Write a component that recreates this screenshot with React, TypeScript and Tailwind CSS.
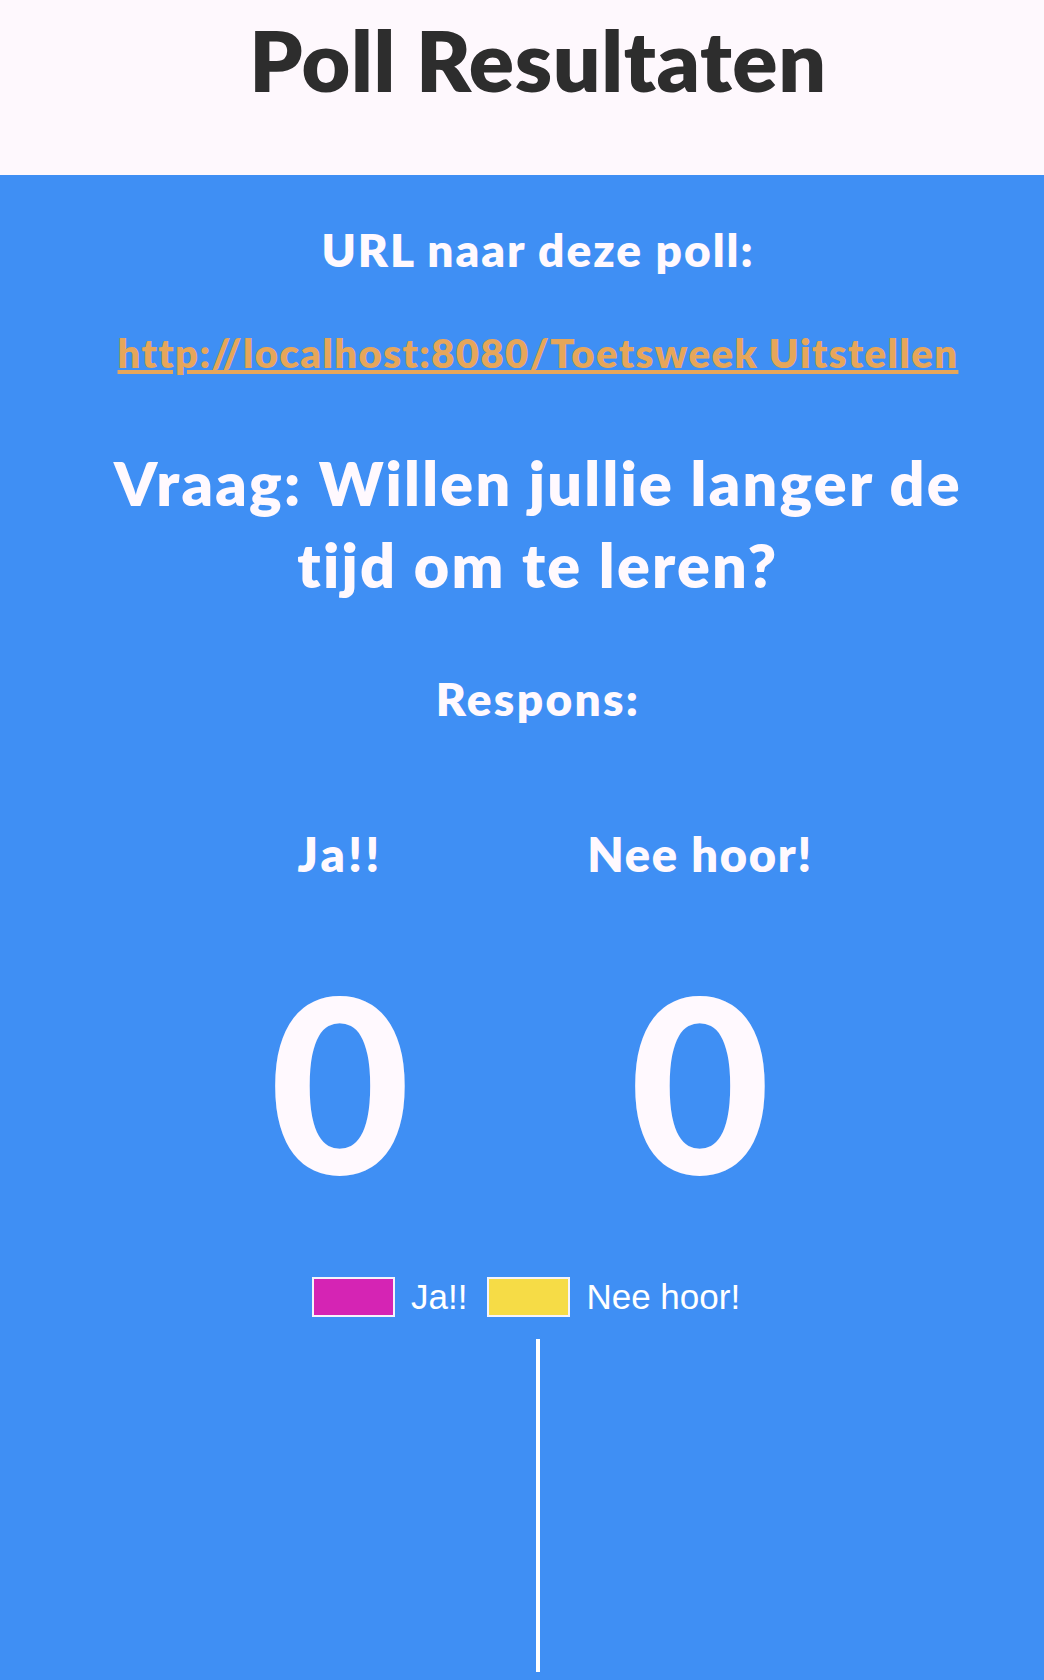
import React from "react";

export default function App() {
  const head = { fontFamily: "Lato, 'Open Sans', sans-serif" } as React.CSSProperties;
  return (
    <div className="w-[1044px] h-[1680px] overflow-hidden bg-[#3f8ff4]" style={head}>
      <header className="h-[175px] bg-[#fef8fd] pl-[32px] pt-[10px] text-center">
        <h1 className="text-[84px] leading-[100px] font-extrabold tracking-[0.6px] text-[#2d2d2d]">Poll Resultaten</h1>
      </header>
      <main className="flex flex-col items-center pl-[32px] text-center text-[#fff9fe]">
        <h2 className="mt-[48px] text-[46px] leading-[54px] font-extrabold tracking-[1.95px]">URL naar deze poll:</h2>
        <a href="#" className="mt-[52px] text-[40px] leading-[48px] font-extrabold tracking-[1.42px] text-[#e6a65a] underline">
          http://localhost:8080/Toetsweek Uitstellen
        </a>
        <h2 className="mt-[65px] text-[61px] leading-[82px] font-extrabold tracking-[2.25px] whitespace-nowrap">
          Vraag: Willen jullie langer de
          <br />
          tijd om te leren?
        </h2>
        <h3 className="mt-[66px] text-[46px] leading-[54px] font-extrabold tracking-[2.3px]">Respons:</h3>
        <div className="mt-[100px] ml-[128px] grid w-[720px] grid-cols-2 self-start">
          <div className="flex flex-col items-center">
            <div className="text-[47px] leading-[56px] font-extrabold tracking-[3.4px]">Ja!!</div>
            <div className="mt-[78px] text-[242px] leading-[242px] font-black">0</div>
          </div>
          <div className="flex flex-col items-center">
            <div className="text-[47px] leading-[56px] font-extrabold tracking-[1.7px]">Nee hoor!</div>
            <div className="mt-[78px] text-[242px] leading-[242px] font-black">0</div>
          </div>
        </div>
        <div
          className="mt-[75px] ml-[280px] flex items-center self-start text-[35px] leading-[40px] text-white"
          style={{ fontFamily: "'Liberation Sans', Arial, sans-serif" }}
        >
          <span className="h-[40px] w-[83px] border-2 border-[#f4f4fb] bg-[#d524b4]" />
          <span className="ml-[16px]">Ja!!</span>
          <span className="ml-[20px] h-[40px] w-[83px] border-2 border-[#f4f4fb] bg-[#f6dc46]" />
          <span className="ml-[16px]">Nee hoor!</span>
        </div>
        <div className="mt-[22px] h-[333px] w-[4px] bg-white" />
      </main>
    </div>
  );
}
